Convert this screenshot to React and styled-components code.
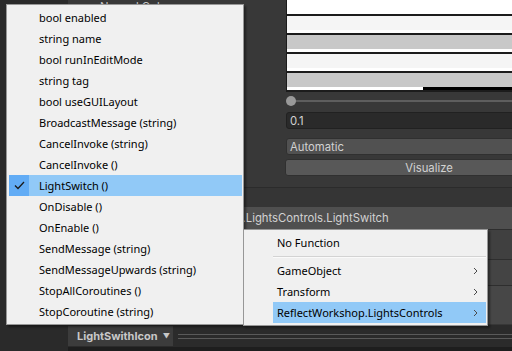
import React from "react";
import styled, { createGlobalStyle } from "styled-components";

const GlobalStyle = createGlobalStyle`
  html, body {
    margin: 0;
    padding: 0;
    background: #383838;
  }
  body {
    font-family: "Inter", "Liberation Sans", sans-serif;
  }
`;

// labels of the rows hidden under the popup are left empty
const colorRows = [
  { label: "Normal Color", color: "#ffffff", alpha: 1 },
  { label: "", color: "#f5f5f5", alpha: 1 },
  { label: "", color: "#c8c8c8", alpha: 1 },
  { label: "", color: "#f5f5f5", alpha: 1 },
  { label: "", color: "#c8c8c8", alpha: 0.5 },
];

const methods = [
  "bool enabled",
  "string name",
  "bool runInEditMode",
  "string tag",
  "bool useGUILayout",
  "BroadcastMessage (string)",
  "CancelInvoke (string)",
  "CancelInvoke ()",
  "LightSwitch ()",
  "OnDisable ()",
  "OnEnable ()",
  "SendMessage (string)",
  "SendMessageUpwards (string)",
  "StopAllCoroutines ()",
  "StopCoroutine (string)",
];

const Screen = styled.div`
  position: relative;
  width: 512px;
  height: 351px;
  overflow: hidden;
  display: grid;
  grid-template-columns: 68px 505px;
  background: #383838;
`;

const SidePanel = styled.div`
  background: #2a2a2a;
`;

const Inspector = styled.div`
  display: flex;
  flex-direction: column;
  background: #383838;
  height: 351px;
`;

const Props = styled.div`
  display: flex;
  flex-direction: column;
  margin-top: -3px;
`;

const PropRow = styled.div`
  display: grid;
  grid-template-columns: 218px 1fr;
  align-items: center;
  height: ${(p) => p.$h}px;
  margin-top: ${(p) => p.$gap || 0}px;
`;

const Label = styled.div`
  padding-left: 32px;
  color: #c4c4c4;
  font-size: 11.3px;
  white-space: nowrap;
`;

const ColorField = styled.div`
  align-self: stretch;
  display: flex;
  flex-direction: column;
  margin-right: 14px;
  background: #1c1c1c;
  padding: 0 0 2px 1px;
`;

const Swatch = styled.div`
  flex: 1;
  background: ${(p) => p.$color};
`;

const AlphaBar = styled.div`
  height: 3px;
  background: #000;
`;

const AlphaFill = styled.div`
  height: 100%;
  background: #fff;
`;

const SliderField = styled.div`
  position: relative;
  height: 12px;
  display: flex;
  align-items: center;
`;

const Track = styled.div`
  flex: 1;
  height: 2px;
  margin-left: 8px;
  background: #5e5e5e;
`;

const Thumb = styled.div`
  position: absolute;
  left: 0;
  top: 1px;
  width: 10px;
  height: 10px;
  border-radius: 50%;
  background: #999999;
`;

const TextField = styled.div`
  height: 17px;
  box-sizing: border-box;
  display: flex;
  align-items: center;
  padding-left: ${(p) => (p.$center ? 0 : 3)}px;
  justify-content: ${(p) => (p.$center ? "center" : "flex-start")};
  margin-left: ${(p) => p.$shift || 0}px;
  border-radius: 3px;
  border: 1px solid ${(p) => p.$border};
  background: ${(p) => p.$bg};
  color: #d2d2d2;
  font-size: 11.3px;
`;

const Spacer = styled.div`
  height: ${(p) => p.$h}px;
  flex-shrink: 0;
`;

const EventHeader = styled.div`
  height: 19px;
  border-top: 1px solid #2b2b2b;
  background: #353535;
`;

const EventRow = styled.div`
  height: 22px;
  padding-left: 79px;
  display: flex;
  align-items: stretch;
  background: #414141;
`;

const FunctionField = styled.div`
  flex: 1;
  display: flex;
  align-items: center;
  padding-left: 4px;
  background: #4f4f4f;
  color: #d2d2d2;
  font-size: 11.3px;
  white-space: nowrap;
`;

const ListBand = styled.div`
  height: ${(p) => p.$h}px;
  background: ${(p) => p.$bg};
  border-top: 1px solid #2e2e2e;
`;

const PreviewBar = styled.div`
  margin-top: auto;
  height: 22px;
  display: flex;
  align-items: center;
  background: #2b2b2b;
  border-bottom: 4px solid #1e1e1e;
`;

const PreviewButton = styled.div`
  height: 20px;
  width: 105px;
  box-sizing: border-box;
  display: flex;
  align-items: center;
  gap: 5px;
  padding-left: 9px;
  background: #3c3c3c;
  color: #c8c8c8;
  font-size: 11px;
  font-weight: 700;
`;

const Caret = styled.span`
  font-size: 7px;
  color: #c8c8c8;
`;

const Grip = styled.div`
  flex: 1;
  height: 3px;
  margin-left: 5px;
  border-top: 1px solid #5a5a5a;
  border-bottom: 1px solid #5a5a5a;
`;

const Menu = styled.div`
  position: absolute;
  left: ${(p) => p.$x}px;
  top: ${(p) => p.$y}px;
  width: ${(p) => p.$w}px;
  box-sizing: border-box;
  padding: 2px 1px 2px 2px;
  background: #f0f0f0;
  border: 1px solid #979797;
  box-shadow: 2px 2px 2px rgba(0, 0, 0, 0.4);
  font-family: "Noto Sans", "Open Sans", sans-serif;
  font-size: 11px;
  color: #000;
`;

const MenuRow = styled.div`
  height: 21px;
  display: flex;
  align-items: center;
  margin-left: ${(p) => p.$gutter || 0}px;
  background: ${(p) => (p.$active ? "#91c9f7" : "transparent")};
`;

const CheckCell = styled.div`
  width: 20px;
  align-self: stretch;
  display: flex;
  align-items: center;
  justify-content: center;
  background: ${(p) => (p.$active ? "#62acf5" : "transparent")};
`;

const MenuText = styled.div`
  flex: 1;
  padding-left: ${(p) => p.$pad}px;
  white-space: nowrap;
`;

const Chevron = styled.svg`
  margin-right: 8px;
`;

const Separator = styled.div`
  height: 7px;
  margin-left: 27px;
  display: flex;
  align-items: center;

  &::before {
    content: "";
    flex: 1;
    height: 1px;
    background: #d3d3d3;
    border-bottom: 1px solid #fafafa;
  }
`;

const Check = () => (
  <svg width="11" height="9" viewBox="0 0 11 9">
    <path d="M1 4.5 L4 7.5 L10 1" fill="none" stroke="#1a1a1a" strokeWidth="1.3" />
  </svg>
);

const Arrow = () => (
  <Chevron width="5" height="8" viewBox="0 0 5 8">
    <path d="M1 1 L4 4 L1 7" fill="none" stroke="#4a4a4a" strokeWidth="1" />
  </Chevron>
);

export default function App() {
  return (
    <>
      <GlobalStyle />
      <Screen>
        <SidePanel />
        <Inspector>
          <Props>
            {colorRows.map((row, i) => (
              <PropRow key={i} $h={19}>
                <Label>{row.label}</Label>
                <ColorField>
                  <Swatch $color={row.color} />
                  <AlphaBar>
                    <AlphaFill style={{ width: `${row.alpha * 100}%` }} />
                  </AlphaBar>
                </ColorField>
              </PropRow>
            ))}
            <PropRow $h={18}>
              <Label />
              <SliderField>
                <Thumb />
                <Track />
              </SliderField>
            </PropRow>
            <PropRow $h={21}>
              <Label />
              <TextField $bg="#2a2a2a" $border="#212121">0.1</TextField>
            </PropRow>
            <PropRow $h={21} $gap={5}>
              <Label />
              <TextField $bg="#515151" $border="#303030">Automatic</TextField>
            </PropRow>
            <PropRow $h={21}>
              <Label />
              <TextField $bg="#585858" $border="#303030" $center $shift={-1}>
                Visualize
              </TextField>
            </PropRow>
          </Props>
          <Spacer $h={9} />
          <EventHeader />
          <EventRow>
            <FunctionField>ReflectWorkshop.LightsControls.LightSwitch</FunctionField>
          </EventRow>
          <ListBand $h={29} $bg="#404040" />
          <ListBand $h={25} $bg="#444444" />
          <ListBand $h={38} $bg="#474747" />
          <PreviewBar>
            <PreviewButton>
              LightSwithIcon <Caret>▼</Caret>
            </PreviewButton>
            <Grip />
          </PreviewBar>
        </Inspector>

        <Menu $x={6} $y={4} $w={238}>
          {methods.map((m) => {
            const active = m === "LightSwitch ()";
            return (
              <MenuRow key={m} $active={active}>
                <CheckCell $active={active}>{active && <Check />}</CheckCell>
                <MenuText $pad={10}>{m}</MenuText>
              </MenuRow>
            );
          })}
        </Menu>

        <Menu $x={243} $y={229} $w={245}>
          <MenuRow $gutter={27}>
            <MenuText $pad={4}>No Function</MenuText>
          </MenuRow>
          <Separator />
          <MenuRow $gutter={27}>
            <MenuText $pad={4}>GameObject</MenuText>
            <Arrow />
          </MenuRow>
          <MenuRow $gutter={27}>
            <MenuText $pad={4}>Transform</MenuText>
            <Arrow />
          </MenuRow>
          <MenuRow $gutter={27} $active>
            <MenuText $pad={4}>ReflectWorkshop.LightsControls</MenuText>
            <Arrow />
          </MenuRow>
        </Menu>
      </Screen>
    </>
  );
}
